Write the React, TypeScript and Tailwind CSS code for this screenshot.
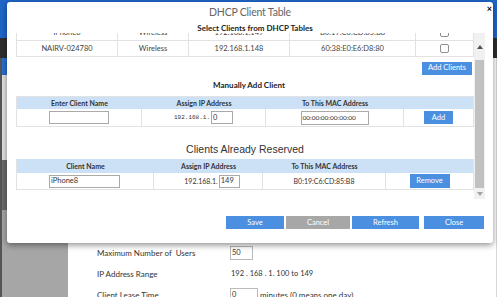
import React from "react";

const font = "font-['Lato','Open_Sans',sans-serif]";
const mono = "font-['Liberation_Mono','DejaVu_Sans_Mono',monospace]";

const dhcpRows = [
  { name: "iPhone8", type: "Wireless", ip: "192.168.1.149", mac: "B0:19:C6:CD:85:B8" },
  { name: "NAIRV-024780", type: "Wireless", ip: "192.168.1.148", mac: "60:38:E0:E6:D8:80" },
];

function Checkbox() {
  return <span className="inline-block h-[9px] w-[9px] rounded-[2px] border border-[#8f8f8f] bg-white" />;
}

function BlueButton({ label, className }: { label: string; className: string }) {
  return (
    <button className={`flex items-center justify-center bg-[#4a8fe0] text-[7.5px] text-white ${className}`}>
      {label}
    </button>
  );
}

function Scrollbar() {
  return (
    <div className="flex w-[11px] flex-col items-center bg-[#f1f1f1]">
      <div className="flex h-[27px] items-center justify-center">
        <svg width="6" height="4" viewBox="0 0 6 4">
          <path d="M0 4 L3 0 L6 4 Z" fill="#505050" />
        </svg>
      </div>
      <div className="w-[9px] flex-1 bg-[#c1c1c1]" />
      <div className="flex h-[11px] items-center justify-center">
        <svg width="6" height="4" viewBox="0 0 6 4">
          <path d="M0 0 L3 4 L6 0 Z" fill="#a3a3a3" />
        </svg>
      </div>
    </div>
  );
}

export default function App() {
  return (
    <div className={`relative h-[297px] w-[497px] overflow-hidden bg-white text-[#333] ${font}`}>
      {/* page behind the dialog */}
      <div className="flex h-full flex-col">
        <div className="h-[38px] shrink-0 bg-[#1f66c9]" />
        <div className="h-[20px] shrink-0 bg-[#2e2e2e]" />
        <div className="flex min-h-0 flex-1 overflow-hidden">
          <div className="flex w-[68px] flex-col border-l-2 border-[#555]">
            <div className="h-[17px] shrink-0 bg-[#2b6fd0]" />
            <div className="h-[85px] shrink-0 bg-[#e2e2e2]" />
            <div className="h-[50px] shrink-0 bg-[#6b6b6b]" />
            <div className="flex-1 bg-[#a6a6a6]" />
          </div>
          <div className="flex flex-1 flex-col gap-[7px] border-r border-[#d6d6d6] pl-[29px] pt-[188px] text-[8px]">
            <div className="flex h-[14px] shrink-0 items-center">
              <span className="w-[133px]">Maximum Number of&nbsp; Users</span>
              <span className="flex h-[14px] w-[23px] items-center border border-[#bbb] pl-[1px] text-[7.5px]">50</span>
            </div>
            <div className="flex h-[14px] shrink-0 items-center">
              <span className="w-[134px]">IP Address Range</span>
              <span className="text-[7.5px]">192 . 168 . 1. 100 to 149</span>
            </div>
            <div className="flex h-[14px] shrink-0 items-center">
              <span className="w-[133px]">Client Lease Time</span>
              <span className="flex h-[14px] w-[28px] items-center border border-[#bbb] pl-[1px] text-[7.5px]">0</span>
              <span className="pl-[2px]">minutes (0 means one day)</span>
            </div>
          </div>
        </div>
      </div>

      {/* dialog */}
      <div className="absolute left-[7px] top-[2px] flex h-[241px] w-[486px] flex-col rounded-[3px] bg-white shadow-[0_2px_6px_rgba(0,0,0,0.45)]">
        <div className="relative flex h-[21px] items-center justify-center">
          <span className="text-[10.5px] tracking-[-0.2px] text-[#666]">DHCP Client Table</span>
          <span className="absolute right-[1px] top-[2px] text-[9px] font-bold leading-none text-black">×</span>
        </div>
        <div className="flex h-[10px] items-start justify-center pl-[10px] text-[8px] font-bold leading-[10px] text-[#222]">
          Select Clients from DHCP Tables
        </div>

        <div className="ml-[9px] flex h-[166px] w-[469px]">
          <div className="flex w-[458px] flex-col overflow-hidden">
            <div className="-mt-[7.5px] flex flex-col">
              {dhcpRows.map((r) => (
                <div key={r.name} className="flex h-[15.5px] border-x border-b border-[#e2e2e2] text-[7.5px] text-[#444]">
                  <div className="flex w-[101px] items-center justify-center border-r border-[#e2e2e2]">{r.name}</div>
                  <div className="flex w-[71px] items-center justify-center border-r border-[#e2e2e2]">{r.type}</div>
                  <div className="flex w-[101px] items-center justify-center border-r border-[#e2e2e2]">{r.ip}</div>
                  <div className="flex w-[126px] items-center justify-center border-r border-[#e2e2e2]">{r.mac}</div>
                  <div className="flex flex-1 items-center justify-center">
                    <Checkbox />
                  </div>
                </div>
              ))}
            </div>
            <div className="flex justify-end pr-[2px] pt-[5px]">
              <BlueButton label="Add Clients" className="h-[13px] w-[50px]" />
            </div>

            <div className="flex h-[21px] items-center justify-center pl-[8px] text-[8px] font-bold text-[#222]">
              Manually Add Client
            </div>
            <div className="flex flex-col border-x border-b border-t border-[#e2e2e2]">
              <div className="flex h-[12.5px] bg-[#cde1f6] text-[7px] font-bold text-[#333]">
                <div className="flex w-[125px] items-center justify-center">Enter Client Name</div>
                <div className="flex w-[124px] items-center justify-center">Assign IP Address</div>
                <div className="flex w-[138px] items-center justify-center">To This MAC Address</div>
                <div className="flex-1" />
              </div>
              <div className="flex h-[17px]">
                <div className="flex w-[125px] items-center justify-center border-r border-[#e2e2e2]">
                  <span className="h-[13px] w-[60px] border border-[#aaa]" />
                </div>
                <div className="flex w-[124px] items-center justify-center gap-[1px] border-r border-[#e2e2e2]">
                  <span className={`${mono} text-[6px]`}>192.168.1.</span>
                  <span className="flex h-[13px] w-[22px] items-center border border-[#aaa] pl-[1px] text-[7.5px]">0</span>
                </div>
                <div className="flex w-[138px] items-center justify-center border-r border-[#e2e2e2]">
                  <span className="flex h-[14px] w-[68px] items-center border border-[#aaa] pl-[1px] text-[6.5px]">
                    00:00:00:00:00:00
                  </span>
                </div>
                <div className="flex flex-1 items-center justify-center">
                  <BlueButton label="Add" className="h-[13px] w-[29px]" />
                </div>
              </div>
            </div>

            <div className="flex h-[32px] items-end justify-center pb-[1px] font-['Liberation_Sans',sans-serif] text-[10.5px] text-[#333]">
              Clients Already Reserved
            </div>
            <div className="flex flex-col border-x border-b border-[#e2e2e2]">
              <div className="flex h-[14px] bg-[#cde1f6] text-[7px] font-bold text-[#333]">
                <div className="flex w-[137px] items-center justify-center">Client Name</div>
                <div className="flex w-[109px] items-center justify-center">Assign IP Address</div>
                <div className="flex w-[123px] items-center justify-center">To This MAC Address</div>
                <div className="flex-1" />
              </div>
              <div className="flex h-[16px]">
                <div className="flex w-[137px] items-center border-r border-[#e2e2e2] pl-[32px]">
                  <span className="flex h-[13px] w-[71px] items-center border border-[#aaa] pl-[1px] text-[7.5px]">iPhone8</span>
                </div>
                <div className="flex w-[109px] items-center justify-center gap-[1px] border-r border-[#e2e2e2] pl-[8px]">
                  <span className="text-[7px]">192.168.1.</span>
                  <span className="flex h-[13px] w-[21px] items-center border border-[#aaa] pl-[1px] text-[7.5px]">149</span>
                </div>
                <div className="flex w-[123px] items-center justify-center border-r border-[#e2e2e2] text-[7px]">
                  B0:19:C6:CD:85:B8
                </div>
                <div className="flex flex-1 items-center justify-center">
                  <BlueButton label="Remove" className="h-[14px] w-[40px]" />
                </div>
              </div>
            </div>
          </div>
          <Scrollbar />
        </div>

        <div className="flex flex-1 items-start justify-end pr-[9px] pt-[17px]">
          <div className="flex gap-[2px]">
            <BlueButton label="Save" className="h-[13px] w-[58px]" />
            <button className="flex h-[13px] w-[64px] items-center justify-center bg-[#a7a7a7] text-[7.5px] text-white">
              Cancel
            </button>
            <BlueButton label="Refresh" className="mr-[3px] h-[13px] w-[67px]" />
            <BlueButton label="Close" className="h-[13px] w-[60px]" />
          </div>
        </div>
      </div>
    </div>
  );
}
